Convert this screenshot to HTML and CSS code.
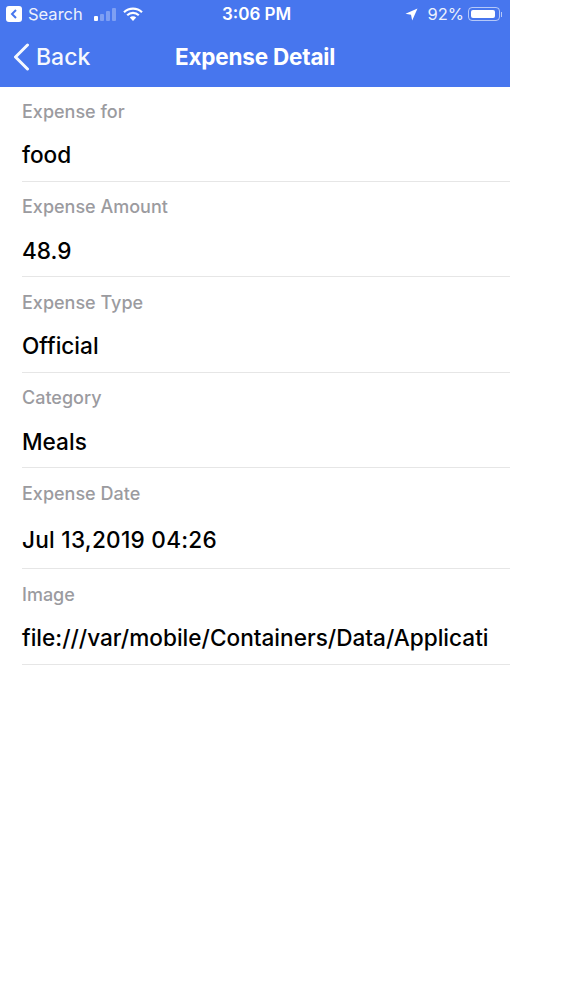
FILE: index.html
```html
<!DOCTYPE html>
<html lang="en">
<head>
    <meta charset="UTF-8">
    <title>Expense Detail</title>
    <link rel="stylesheet" href="styles.css">
</head>
<body>
    <div class="screen">
        <div class="header">
            <div class="status-bar">
                <div class="status-left">
                    <span class="return-badge">
                        <svg width="8" height="10" viewBox="0 0 8 10"><path d="M6 1 L2 5 L6 9" fill="none" stroke="#4776ee" stroke-width="2"/></svg>
                    </span>
                    <span class="return-label">Search</span>
                    <span class="signal">
                        <i class="bar bar-on b1"></i><i class="bar b2"></i><i class="bar b3"></i><i class="bar b4"></i>
                    </span>
                    <svg class="wifi" width="20" height="14" viewBox="0 0 20 14">
                        <path d="M1 5.2 A13 13 0 0 1 19 5.2" fill="none" stroke="#fff" stroke-width="2.2"/>
                        <path d="M4.2 8.2 A8.5 8.5 0 0 1 15.8 8.2" fill="none" stroke="#fff" stroke-width="2.2"/>
                        <path d="M6.8 10.6 L10 14 L13.2 10.6 A4.6 4.6 0 0 0 6.8 10.6 Z" fill="#fff"/>
                    </svg>
                </div>
                <div class="status-time">3:06 PM</div>
                <div class="status-right">
                    <svg class="location" width="13" height="13" viewBox="0 0 13 13"><path d="M12.5 0.5 L0.5 5.8 L6 6.8 L7.2 12.5 Z" fill="#fff"/></svg>
                    <span class="battery-pct">92%</span>
                    <span class="battery"><span class="battery-fill"></span></span>
                    <span class="battery-cap"></span>
                </div>
            </div>
            <div class="nav-bar">
                <div class="back">
                    <svg width="18" height="28" viewBox="0 0 18 28"><path d="M15.5 2 L3.5 14 L15.5 26" fill="none" stroke="#fff" stroke-width="3" stroke-linecap="round" stroke-linejoin="round"/></svg>
                    <span>Back</span>
                </div>
                <div class="nav-title">Expense Detail</div>
            </div>
        </div>

        <div class="details">
            <div class="row">
                <div class="label">Expense for</div>
                <div class="value">food</div>
            </div>
            <div class="row">
                <div class="label">Expense Amount</div>
                <div class="value">48.9</div>
            </div>
            <div class="row">
                <div class="label">Expense Type</div>
                <div class="value">Official</div>
            </div>
            <div class="row">
                <div class="label">Category</div>
                <div class="value">Meals</div>
            </div>
            <div class="row row-tall">
                <div class="label">Expense Date</div>
                <div class="value">Jul 13,2019 04:26</div>
            </div>
            <div class="row">
                <div class="label">Image</div>
                <div class="value">file:///var/mobile/Containers/Data/Applicati</div>
            </div>
        </div>
    </div>
</body>
</html>
```

FILE: styles.css
```css
* {
    box-sizing: border-box;
}
body {
    margin: 0;
    background-color: #fff;
    font-family: Inter, "Liberation Sans", sans-serif;
}
.screen {
    width: 510px;
}
.header {
    height: 87px;
    background-color: #4776ee;
    color: #fff;
}
.status-bar {
    height: 28px;
    display: flex;
    align-items: center;
    justify-content: space-between;
    padding: 0 0 0 6px;
    position: relative;
}
.status-left {
    display: flex;
    align-items: center;
}
.return-badge {
    width: 16px;
    height: 16px;
    background-color: #fff;
    border-radius: 3px;
    display: flex;
    align-items: center;
    justify-content: center;
}
.return-label {
    font-size: 16.5px;
    margin-left: 6px;
    opacity: 0.9;
}
.signal {
    display: flex;
    align-items: flex-end;
    gap: 2px;
    margin-left: 11px;
    height: 13px;
}
.bar {
    width: 4px;
    background-color: rgba(255, 255, 255, 0.3);
    border-radius: 1px;
}
.bar-on {
    background-color: #fff;
}
.b1 { height: 5px; }
.b2 { height: 7px; }
.b3 { height: 10px; }
.b4 { height: 13px; }
.wifi {
    margin-left: 7px;
}
.status-time {
    position: absolute;
    left: 222px;
    font-size: 17px;
    font-weight: 600;
}
.status-right {
    display: flex;
    align-items: center;
    padding-right: 8px;
}
.battery-pct {
    font-size: 16.5px;
    margin-left: 10px;
    opacity: 0.9;
}
.battery {
    width: 32px;
    height: 14px;
    margin-left: 4px;
    padding: 2px;
    border: 1px solid rgba(255, 255, 255, 0.6);
    border-radius: 4px;
}
.battery-fill {
    display: block;
    width: 91%;
    height: 100%;
    background-color: #fff;
    border-radius: 2px;
}
.battery-cap {
    width: 1px;
    height: 5px;
    margin-left: 1px;
    background-color: rgba(255, 255, 255, 0.6);
}
.nav-bar {
    height: 58px;
    display: flex;
    align-items: center;
    position: relative;
    padding-left: 12px;
}
.back {
    display: flex;
    align-items: center;
    gap: 6px;
    font-size: 23px;
    font-weight: 500;
    opacity: 0.95;
}
.nav-title {
    position: absolute;
    left: 175px;
    margin-top: -1px;
    font-size: 22.5px;
    font-weight: 700;
    letter-spacing: -0.2px;
}
.details {
    padding-left: 22px;
}
.row {
    height: 95.5px;
    padding-top: 14.5px;
    border-bottom: 1px solid #e6e6e6;
}
.row:first-child {
    height: 94.5px;
    padding-top: 13.5px;
}
.row-tall {
    height: 101px;
}
.label {
    font-size: 18px;
    line-height: 21px;
    font-weight: 500;
    color: #9b9b9f;
}
.value {
    margin-top: 20.5px;
    font-size: 22.6px;
    line-height: 26px;
    font-weight: 500;
    color: #000;
    white-space: nowrap;
}
.row-tall .value {
    margin-top: 23px;
    letter-spacing: 0.25px;
}
```
